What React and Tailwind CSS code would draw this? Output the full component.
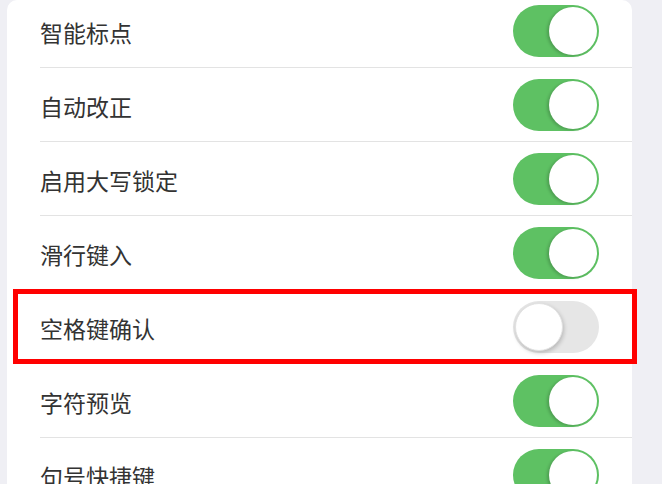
import React from "react";

const rows = [
  { label: "智能标点", on: true },
  { label: "自动改正", on: true },
  { label: "启用大写锁定", on: true },
  { label: "滑行键入", on: true },
  { label: "空格键确认", on: false },
  { label: "字符预览", on: true },
  { label: "句号快捷键", on: true },
];

function Toggle({ on }) {
  if (on) {
    return (
      <div className="w-[86px] h-[52px] rounded-full bg-[#5ec163] flex items-center justify-end pr-[2px]">
        <div className="w-[48px] h-[48px] rounded-full bg-white shadow-[-2px_1px_3px_rgba(0,0,0,0.18)]" />
      </div>
    );
  }
  return (
    <div className="w-[86px] h-[52px] rounded-full bg-[#e6e6e6] flex items-center pl-[2px]">
      <div className="w-[48px] h-[48px] rounded-full bg-white shadow-[1px_2px_4px_rgba(0,0,0,0.2)] border border-[#e2e2e2]" />
    </div>
  );
}

export default function App() {
  return (
    <div
      className="relative w-[662px] h-[484px] overflow-hidden bg-[#efeff4] pl-[7px] pr-[30px]"
      style={{ fontFamily: '"Noto Sans CJK SC", "Noto Sans", sans-serif' }}
    >
      <div className="h-full bg-white rounded-t-[10px] overflow-hidden">
        <div className="-mt-[6px]">
          {rows.map((r, i) => (
            <div key={i} className="h-[74px] pl-[33px] flex flex-col">
              <div className="flex-1 flex items-center justify-between pr-[33px]">
                <span className="text-[23px] text-[#333] pt-[4px]">{r.label}</span>
                <Toggle on={r.on} />
              </div>
              <div className="h-px bg-[#e3e3e3]" />
            </div>
          ))}
        </div>
      </div>
      <div className="absolute left-[13px] top-[289px] w-[624px] h-[75px] border-[5px] border-[#ff0000]" />
    </div>
  );
}
